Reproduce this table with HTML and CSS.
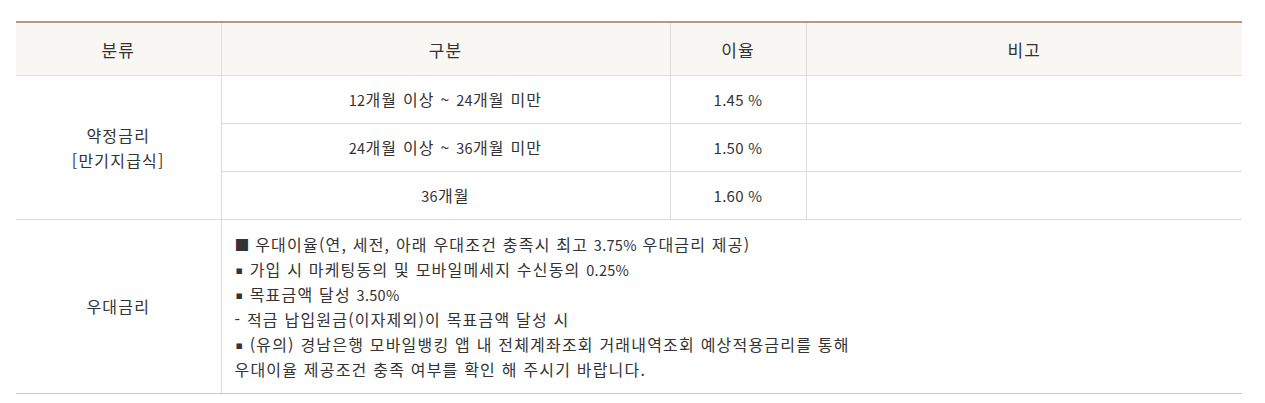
FILE: index.html
```html
<!DOCTYPE html>
<html lang="ko">
<head>
<meta charset="utf-8">
<link rel="stylesheet" href="styles.css">
</head>
<body>
<table class="rate-table">
  <colgroup>
    <col class="c1"><col class="c2"><col class="c3"><col class="c4">
  </colgroup>
  <thead>
    <tr><th>분류</th><th>구분</th><th>이율</th><th>비고</th></tr>
  </thead>
  <tbody>
    <tr class="r">
      <td rowspan="3" class="first">약정금리<br>[만기지급식]</td>
      <td><span class="num">12</span>개월 이상 ~ <span class="num">24</span>개월 미만</td><td class="rate">1.45 %</td><td></td>
    </tr>
    <tr class="r"><td><span class="num">24</span>개월 이상 ~ <span class="num">36</span>개월 미만</td><td class="rate">1.50 %</td><td></td></tr>
    <tr class="r"><td><span class="num">36</span>개월</td><td class="rate">1.60 %</td><td></td></tr>
    <tr class="last">
      <td class="first">우대금리</td>
      <td colspan="3" class="desc">
        <p><span class="sq">■</span> 우대이율(연, 세전, 아래 우대조건 충족시 최고 <span class="num">3.75%</span> 우대금리 제공)</p>
        <p><span class="dot">▪</span> 가입 시 마케팅동의 및 모바일메세지 수신동의 <span class="num">0.25%</span></p>
        <p><span class="dot">▪</span> 목표금액 달성 <span class="num">3.50%</span></p>
        <p>- 적금 납입원금(이자제외)이 목표금액 달성 시</p>
        <p><span class="dot">▪</span> (유의) 경남은행 모바일뱅킹 앱 내 전체계좌조회 거래내역조회 예상적용금리를 통해</p>
        <p>우대이율 제공조건 충족 여부를 확인 해 주시기 바랍니다.</p>
      </td>
    </tr>
  </tbody>
</table>
</body>
</html>
```
FILE: styles.css
```css
html, body { margin: 0; padding: 0; background: #fff; }
body { padding: 21px 0 0 16px; font-family: "Noto Sans CJK KR", "Noto Sans", sans-serif; color: #333; }
.rate-table { width: 1226px; border-collapse: collapse; table-layout: fixed; border-top: 2px solid #b39b82; border-bottom: 1px solid #c8c8c8; }
.c1 { width: 205px; } .c2 { width: 449px; } .c3 { width: 136px; } .c4 { width: 436px; }
th { background: #f9f7f4; font-weight: 400; font-size: 17px; letter-spacing: 1px; height: 52px; padding: 0; border-left: 1px solid #dcdcdc; border-bottom: 1px solid #dcdcdc; }
th:first-child { border-left: none; }
td { font-size: 16px; letter-spacing: 1.2px; text-align: center; padding: 0; border-left: 1px solid #dcdcdc; border-bottom: 1px solid #dcdcdc; line-height: 25px; }
td.first { border-left: none; }
.r td { height: 47px; }
.last td { border-bottom: 1px solid #c8c8c8; }
.num { font-size: 14.5px; letter-spacing: 0.3px; line-height: 1; }
.rate { font-size: 15px; letter-spacing: 0.3px; }
.desc { text-align: left; padding: 12px 12px 11px 13px; }
.desc p { margin: 0; height: 25px; line-height: 25px; }
.sq { font-size: 15px; letter-spacing: 0; line-height: 1; }
.dot { font-family: "DejaVu Sans", sans-serif; font-size: 11px; letter-spacing: 0; line-height: 1; margin-left: 1px; margin-right: 1px; vertical-align: 2px; }
```
